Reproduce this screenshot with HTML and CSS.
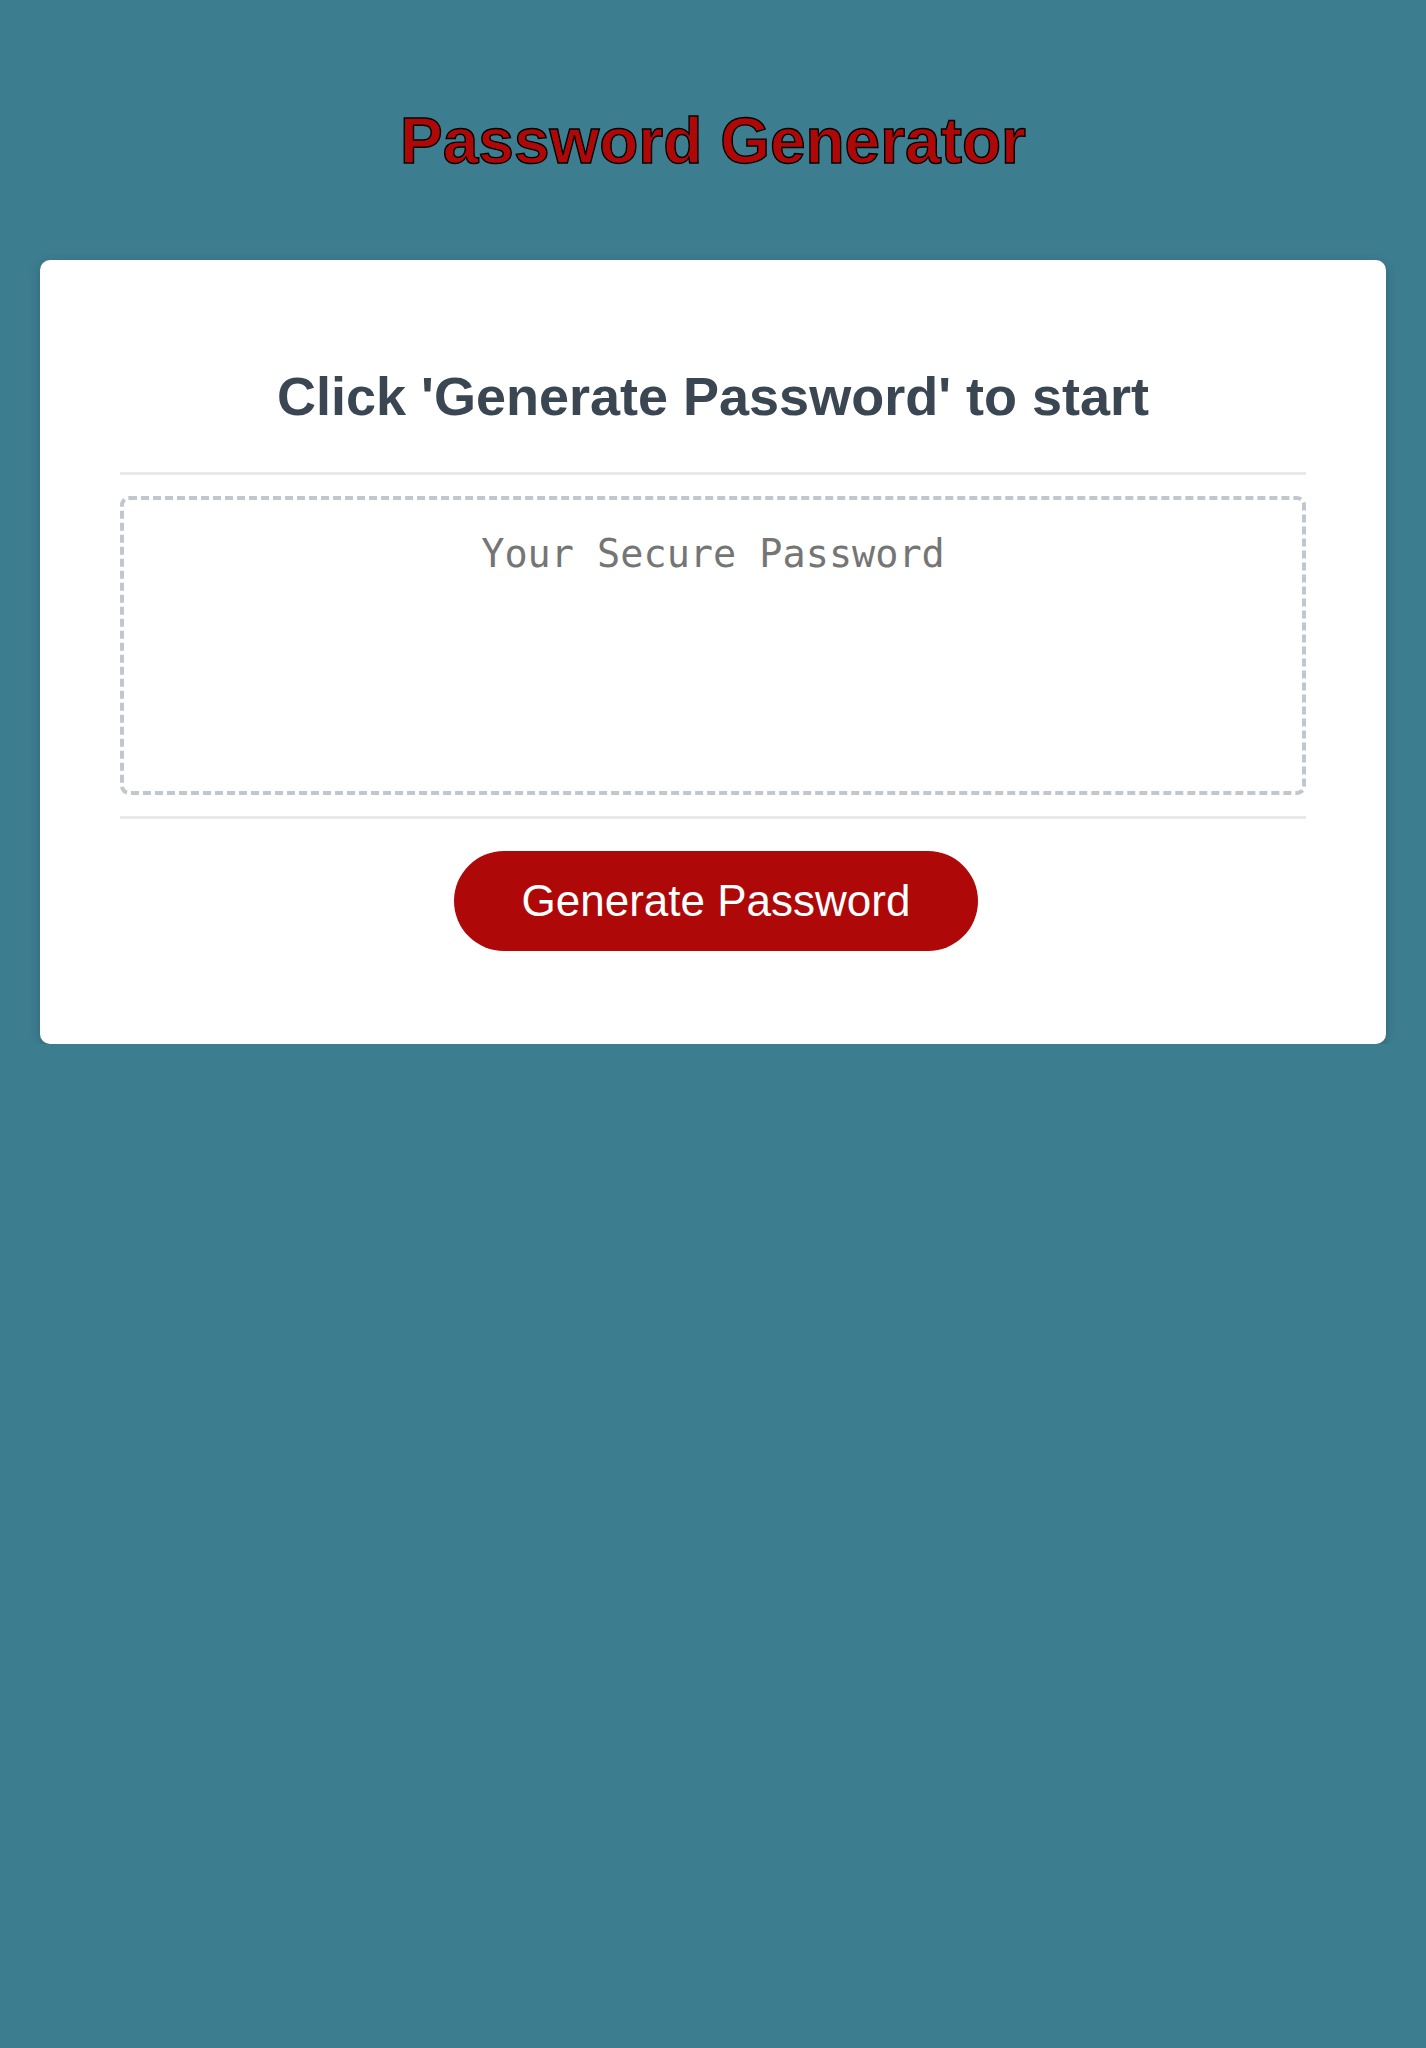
FILE: index.html
```html
<!DOCTYPE html>
<html lang="en">
<head>
<meta charset="UTF-8">
<title>Password Generator</title>
<link rel="stylesheet" href="styles.css">
</head>
<body>
<div class="wrapper">
  <header class="page-header">
    <h1 class="page-title">Password Generator</h1>
  </header>
  <div class="card">
    <div class="card-header">
      <h2 class="card-title">Click 'Generate Password' to start</h2>
    </div>
    <div class="card-body">
      <textarea class="password-box" readonly placeholder="Your Secure Password" aria-label="Generated Password"></textarea>
    </div>
    <div class="card-footer">
      <button class="btn" type="button">Generate Password</button>
    </div>
  </div>
</div>
</body>
</html>
```

FILE: styles.css
```css
* {
  box-sizing: border-box;
}

html,
body {
  margin: 0;
  padding: 0;
  min-height: 100%;
}

body {
  background-color: #3d7d90;
  font-family: "Liberation Sans", Arial, Helvetica, sans-serif;
}

.wrapper {
  padding: 104px 40px 0;
}

.page-header {
  display: flex;
  justify-content: center;
}

.page-title {
  margin: 0;
  font-size: 64px;
  font-weight: 700;
  line-height: normal;
  color: #af0808;
  -webkit-text-stroke: 1.4px #000;
  text-align: center;
}

.card {
  margin-top: 82px;
  background-color: #fff;
  border-radius: 10px;
  padding: 60px 80px;
  box-shadow: 0 3px 12px rgba(0, 0, 0, 0.18);
}

.card-header::after {
  content: "";
  display: block;
  height: 3px;
  background-color: #e7e9eb;
}

.card-title {
  margin: 45px 0;
  font-size: 54px;
  font-weight: 700;
  line-height: normal;
  color: #3a4752;
  text-align: center;
}

.card-body {
  padding: 21px 0;
}

.password-box {
  display: block;
  width: 100%;
  height: 299px;
  margin: 0;
  padding: 31px 15px 15px;
  border: 4px dashed #c0c7cf;
  border-radius: 9px;
  resize: none;
  font-family: "DejaVu Sans Mono", Menlo, monospace;
  font-size: 38.5px;
  line-height: normal;
  text-align: center;
  color: #333;
  background: #fff;
  outline: none;
}

.password-box::placeholder {
  color: #757575;
  opacity: 1;
}

.card-footer {
  display: flex;
  flex-direction: column;
  align-items: center;
}

.card-footer::before {
  content: "";
  display: block;
  align-self: stretch;
  height: 3px;
  background-color: #e7e9eb;
}

.btn {
  margin: 32px 0 33px 6px;
  height: 100px;
  padding: 0 68px;
  border: none;
  border-radius: 50px;
  background-color: #af0808;
  color: #fff;
  font-family: "Liberation Sans", Arial, Helvetica, sans-serif;
  font-size: 44px;
  line-height: 44px;
  cursor: pointer;
}
```
